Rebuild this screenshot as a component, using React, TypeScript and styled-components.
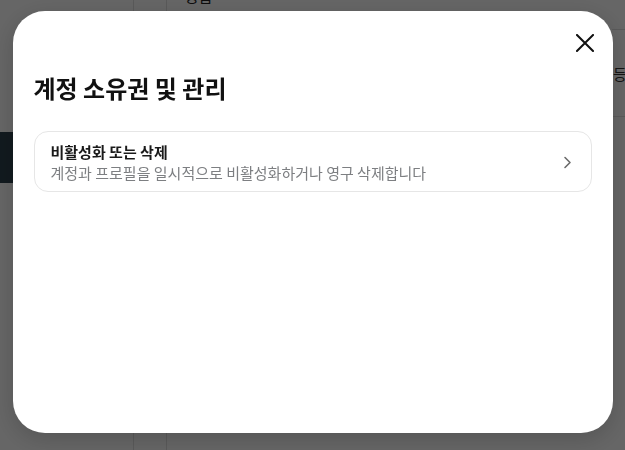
import React from 'react';
import styled, { createGlobalStyle } from 'styled-components';

const GlobalStyle = createGlobalStyle`
  html, body {
    margin: 0;
    padding: 0;
    width: 625px;
    height: 450px;
    overflow: hidden;
    background: #ffffff;
    font-family: 'Noto Sans CJK KR', 'Noto Sans', sans-serif;
  }
  * {
    box-sizing: border-box;
  }
`;

/* underlying page (dimmed behind the modal) */
const Page = styled.div`
  display: flex;
  width: 625px;
  height: 450px;
  background: #ffffff;
`;

const Sidebar = styled.div`
  width: 134px;
  flex-shrink: 0;
  border-right: 1px solid #e1e1e1;
  padding-top: 132px;
`;

const SideItem = styled.div<{ $active?: boolean }>`
  height: 51px;
  background: ${(p) => (p.$active ? '#2d414d' : 'transparent')};
`;

const Gutter = styled.div`
  width: 33px;
  flex-shrink: 0;
  border-right: 1px solid #e1e1e1;
`;

const Main = styled.div`
  flex: 1;
  padding-left: 18px;
  color: #222;
  font-size: 15px;
`;

const CutText = styled.div`
  margin-top: -14px;
  line-height: 20px;
`;

const RightPanel = styled.div`
  width: 13px;
  flex-shrink: 0;
  padding-top: 29px;
  overflow: hidden;
`;

const PanelRow = styled.div`
  height: 88px;
  border-top: 1px solid #e1e1e1;
  border-bottom: 1px solid #e1e1e1;
  display: flex;
  align-items: center;
  padding-left: 1px;
  font-size: 15px;
  color: #333;
  white-space: nowrap;
`;

/* modal */
const Overlay = styled.div`
  position: fixed;
  inset: 0;
  background: rgba(0, 0, 0, 0.6);
  display: flex;
  justify-content: center;
  align-items: flex-start;
  padding-top: 11px;
`;

const Modal = styled.div`
  width: 600px;
  height: 422px;
  background: #ffffff;
  border-radius: 32px;
  padding: 20px 21px;
  box-shadow: 0 6px 24px rgba(0, 0, 0, 0.18);
`;

const Header = styled.div`
  display: flex;
  justify-content: flex-end;
  margin-right: -5px;
`;

const CloseButton = styled.button`
  width: 24px;
  height: 24px;
  padding: 0;
  border: none;
  background: none;
  display: flex;
  align-items: center;
  justify-content: center;
  cursor: pointer;
`;

const Title = styled.h2`
  margin: 17px 0 0;
  font-size: 24px;
  line-height: 32px;
  font-weight: 700;
  color: #111111;
`;

const Card = styled.button`
  width: 100%;
  margin-top: 27px;
  display: flex;
  align-items: center;
  justify-content: space-between;
  padding: 9px 19px 8px 16px;
  border: 1px solid #e6e6e6;
  border-radius: 14px;
  background: #ffffff;
  text-align: left;
  font-family: inherit;
  cursor: pointer;
`;

const CardText = styled.div`
  display: flex;
  flex-direction: column;
`;

const CardTitle = styled.span`
  font-size: 15px;
  line-height: 21px;
  font-weight: 700;
  color: #1a1a1a;
`;

const CardDesc = styled.span`
  font-size: 15px;
  line-height: 21px;
  color: #7d7f82;
`;

const CloseIcon = () => (
  <svg width="18" height="18" viewBox="0 0 18 18" fill="none">
    <path d="M1 1L17 17M17 1L1 17" stroke="#111111" strokeWidth="2" strokeLinecap="square" />
  </svg>
);

const Chevron = () => (
  <svg width="9" height="13" viewBox="0 0 9 13" fill="none">
    <path d="M2 1.5L7 6.5L2 11.5" stroke="#6b6b6b" strokeWidth="1.6" strokeLinecap="round" strokeLinejoin="round" />
  </svg>
);

const App = () => {
  return (
    <>
      <GlobalStyle />
      <Page>
        <Sidebar>
          <SideItem $active />
        </Sidebar>
        <Gutter />
        <Main>
          <CutText>등급</CutText>
        </Main>
        <RightPanel>
          <PanelRow>등록</PanelRow>
        </RightPanel>
      </Page>
      <Overlay>
        <Modal>
          <Header>
            <CloseButton aria-label='닫기'>
              <CloseIcon />
            </CloseButton>
          </Header>
          <Title>계정 소유권 및 관리</Title>
          <Card>
            <CardText>
              <CardTitle>비활성화 또는 삭제</CardTitle>
              <CardDesc>계정과 프로필을 일시적으로 비활성화하거나 영구 삭제합니다</CardDesc>
            </CardText>
            <Chevron />
          </Card>
        </Modal>
      </Overlay>
    </>
  );
};

export default App;
